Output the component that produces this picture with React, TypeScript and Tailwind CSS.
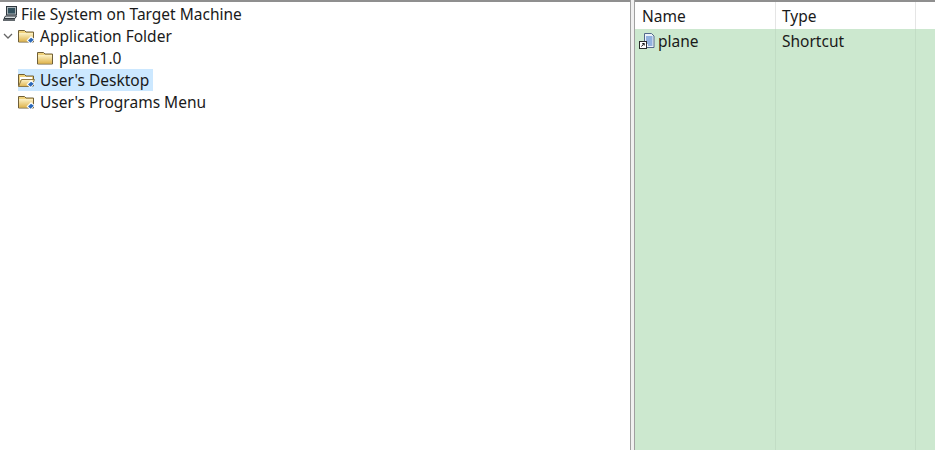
const FolderIcon = ({ open = false, badge = false }: { open?: boolean; badge?: boolean }) => (
  <svg width="17" height="16" viewBox="0 0 17 16" className="shrink-0">
    <defs>
      <linearGradient id="folderFill" x1="0" y1="0" x2="0" y2="1">
        <stop offset="0" stopColor="#fdf3c8" />
        <stop offset="1" stopColor="#dfb44e" />
      </linearGradient>
    </defs>
    <path d="M0.500 2.500h6l1.500 1.500h7.500v10h-15z" fill="#f0d27c" stroke="#6f5f38" />
    {open ? (
      <>
        <path d="M2 5h12v3H2z" fill="#ffffff" />
        <path d="M0.500 14.500l3-7h13l-3 7z" fill="url(#folderFill)" stroke="#8f7a48" />
      </>
    ) : (
      <path d="M1 5h14v8.500H1z" fill="url(#folderFill)" />
    )}
    {badge && (
      <>
        <path d="M8.500 12.500l4.500-4.500 4 3.500-4.500 4.500z" fill="#ffffff" />
        <path d="M10 12.500l3-2.800 2.800 2-3.200 3z" fill="#2a68b8" />
      </>
    )}
  </svg>
);

const ComputerIcon = () => (
  <svg width="16" height="16" viewBox="0 0 16 16" className="shrink-0">
    <rect x="4.500" y="0.500" width="10" height="8.500" fill="#aab4b8" stroke="#2f373e" />
    <rect x="6" y="2" width="7" height="5.500" fill="#33515e" />
    <path d="M3.500 10h11l-1.500 2.500h-11z" fill="#d7dcde" stroke="#2f373e" />
    <path d="M1 14h12" stroke="#2f373e" strokeWidth="1.500" />
  </svg>
);

const ShortcutIcon = () => (
  <svg width="16" height="16" viewBox="0 0 16 16" className="shrink-0">
    <path d="M5.500 0.500h7l2.500 2.500v11.500h-9.500z" fill="#eef3fa" stroke="#53688a" />
    <path d="M7 4h6.500M7 6h6.500M7 8h6.500M7 10h6.500M9 12h4.500" stroke="#3670c4" />
    <rect x="0.500" y="8.500" width="7" height="7" fill="#ffffff" stroke="#2a2a2a" />
    <path d="M2.500 13.500l2.500-3M3.300 10.500H5.200V12.500" stroke="#111111" fill="none" />
  </svg>
);

const Chevron = () => (
  <svg width="10" height="10" viewBox="0 0 10 10" className="shrink-0">
    <path d="M1 3l4 4 4-4" fill="none" stroke="#666666" strokeWidth="1.300" />
  </svg>
);

export default function App() {
  return (
    <div className="flex h-[450px] w-[935px] overflow-hidden bg-white font-['Noto_Sans',sans-serif] text-[15.5px] leading-[22px] text-[#1a1a1a]">
      <div className="flex h-full w-[630px] shrink-0 flex-col border-t-2 border-[#8f8f8f] pt-[1px]">
        <div className="flex h-[22px] items-center gap-[3px] pl-[2px]">
          <ComputerIcon />
          <span>File System on Target Machine</span>
        </div>
        <div className="flex h-[22px] items-center pl-[3px]">
          <Chevron />
          <div className="ml-[5px] flex items-center gap-[5px]">
            <FolderIcon badge />
            <span>Application Folder</span>
          </div>
        </div>
        <div className="flex h-[22px] items-center gap-[5px] pl-[37px]">
          <FolderIcon />
          <span>plane1.0</span>
        </div>
        <div className="flex h-[22px] items-center pl-[18px]">
          <div className="flex h-[22px] w-[135px] items-center gap-[5px] bg-[#cce8ff]">
            <FolderIcon open badge />
            <span>User's Desktop</span>
          </div>
        </div>
        <div className="flex h-[22px] items-center gap-[5px] pl-[18px]">
          <FolderIcon badge />
          <span>User's Programs Menu</span>
        </div>
      </div>
      <div className="h-full w-[5px] shrink-0 border-x border-[#a0a0a0] bg-[#f0f0f0]" />
      <div className="flex h-full min-w-0 flex-1 flex-col border-t-2 border-[#8f8f8f]">
        <div className="flex h-[27px] shrink-0 items-center bg-white">
          <div className="flex h-full w-[141px] items-center border-r border-[#e5e5e5] pl-[7px]">Name</div>
          <div className="flex h-full w-[140px] items-center border-r border-[#e5e5e5] pl-[6px]">Type</div>
        </div>
        <div className="flex min-h-0 flex-1 bg-[#cce8cf]">
          <div className="flex h-full w-[141px] items-start border-r border-[#c2ddc5] pl-[4px] pt-[1px]">
            <div className="flex h-[22px] items-center gap-[3px]">
              <ShortcutIcon />
              <span>plane</span>
            </div>
          </div>
          <div className="h-full w-[140px] border-r border-[#c2ddc5] pl-[6px] pt-[1px]">Shortcut</div>
        </div>
      </div>
    </div>
  );
}
